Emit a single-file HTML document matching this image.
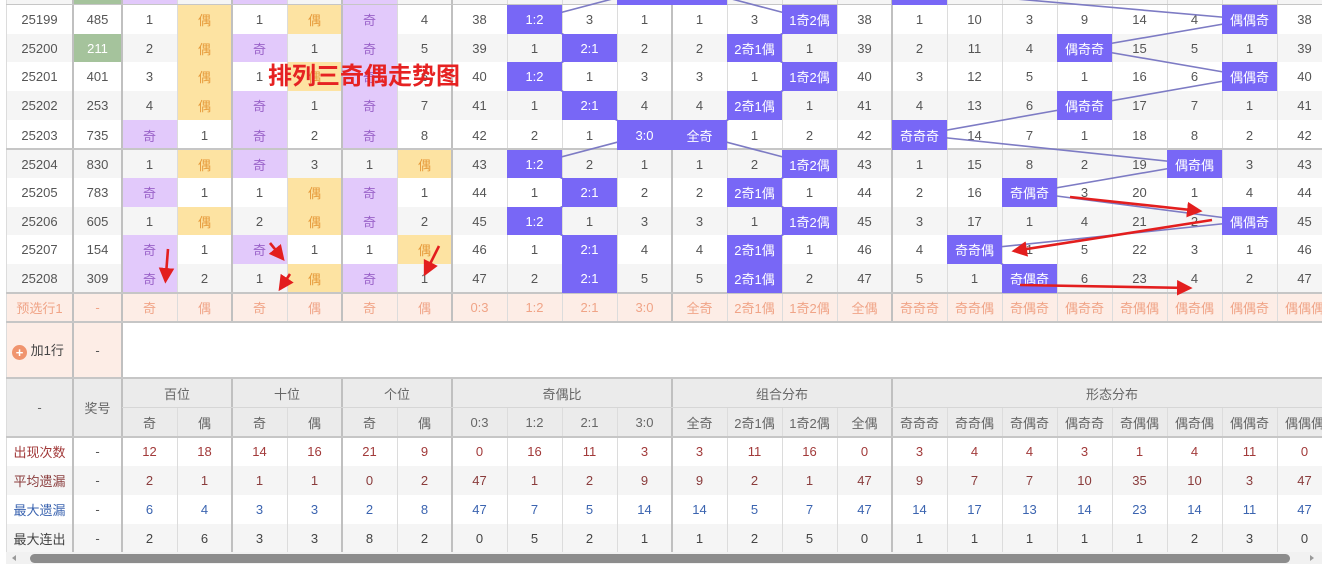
<!DOCTYPE html>
<html><head><meta charset="utf-8"><style>
*{margin:0;padding:0;box-sizing:border-box}
body{width:1322px;height:564px;overflow:hidden;background:#fff;font-family:"Liberation Sans","Noto Sans CJK SC",sans-serif;font-size:13px;color:#555;position:relative}
table{position:absolute;left:6px;top:0;border-collapse:collapse;table-layout:fixed;width:1326px}
td{padding:0;text-align:center;vertical-align:middle;overflow:hidden;white-space:nowrap}
tr.z td{background:#f5f5f5}
tr.w td{background:#fff}
td.p{background:#e2c9fb!important;color:#9a62c9}
td.y{background:#fde3a2!important;color:#e69a3a}
td.b{background:#7867f6!important;color:#fff;position:relative;z-index:2}
td.g{background:#a5c39c!important;color:#fff}
tr.pre td{background:#fdede6;color:#f0a487}
tr.h td{background:#ebebeb;color:#666}
.r1{color:#a23a3a}.r2{color:#8a3c3c}.r3{color:#3b64b0}.r4{color:#444}
.vl{position:absolute;top:0;width:1px;background:#dcdcdc;z-index:0}
.vt{position:absolute;width:2px;background:#c0c0c0;z-index:0}
.hl{position:absolute;height:2px;background:#c6c6c6;z-index:0}
svg{position:absolute;left:0;top:0}
</style></head><body>
<table>
<colgroup><col style="width:67px"><col style="width:49px"><col span="22" style="width:55px"></colgroup>
<tr class="z" style="height:5px"><td></td><td class="g"></td><td class="p"></td><td></td><td class="p"></td><td></td><td class="p"></td><td></td><td></td><td></td><td></td><td class="b"></td><td class="b"></td><td></td><td></td><td></td><td class="b"></td><td></td><td></td><td></td><td></td><td></td><td></td><td></td></tr>
<tr class="w" style="height:29px"><td>25199</td><td>485</td><td>1</td><td class="y">偶</td><td>1</td><td class="y">偶</td><td class="p">奇</td><td>4</td><td>38</td><td class="b">1:2</td><td>3</td><td>1</td><td>1</td><td>3</td><td class="b">1奇2偶</td><td>38</td><td>1</td><td>10</td><td>3</td><td>9</td><td>14</td><td>4</td><td class="b">偶偶奇</td><td>38</td></tr>
<tr class="z" style="height:28px"><td>25200</td><td class="g">211</td><td>2</td><td class="y">偶</td><td class="p">奇</td><td>1</td><td class="p">奇</td><td>5</td><td>39</td><td>1</td><td class="b">2:1</td><td>2</td><td>2</td><td class="b">2奇1偶</td><td>1</td><td>39</td><td>2</td><td>11</td><td>4</td><td class="b">偶奇奇</td><td>15</td><td>5</td><td>1</td><td>39</td></tr>
<tr class="w" style="height:29px"><td>25201</td><td>401</td><td>3</td><td class="y">偶</td><td>1</td><td class="y">偶</td><td class="p">奇</td><td>6</td><td>40</td><td class="b">1:2</td><td>1</td><td>3</td><td>3</td><td>1</td><td class="b">1奇2偶</td><td>40</td><td>3</td><td>12</td><td>5</td><td>1</td><td>16</td><td>6</td><td class="b">偶偶奇</td><td>40</td></tr>
<tr class="z" style="height:29px"><td>25202</td><td>253</td><td>4</td><td class="y">偶</td><td class="p">奇</td><td>1</td><td class="p">奇</td><td>7</td><td>41</td><td>1</td><td class="b">2:1</td><td>4</td><td>4</td><td class="b">2奇1偶</td><td>1</td><td>41</td><td>4</td><td>13</td><td>6</td><td class="b">偶奇奇</td><td>17</td><td>7</td><td>1</td><td>41</td></tr>
<tr class="w" style="height:30px"><td>25203</td><td>735</td><td class="p">奇</td><td>1</td><td class="p">奇</td><td>2</td><td class="p">奇</td><td>8</td><td>42</td><td>2</td><td>1</td><td class="b">3:0</td><td class="b">全奇</td><td>1</td><td>2</td><td>42</td><td class="b">奇奇奇</td><td>14</td><td>7</td><td>1</td><td>18</td><td>8</td><td>2</td><td>42</td></tr>
<tr class="z" style="height:28px"><td>25204</td><td>830</td><td>1</td><td class="y">偶</td><td class="p">奇</td><td>3</td><td>1</td><td class="y">偶</td><td>43</td><td class="b">1:2</td><td>2</td><td>1</td><td>1</td><td>2</td><td class="b">1奇2偶</td><td>43</td><td>1</td><td>15</td><td>8</td><td>2</td><td>19</td><td class="b">偶奇偶</td><td>3</td><td>43</td></tr>
<tr class="w" style="height:29px"><td>25205</td><td>783</td><td class="p">奇</td><td>1</td><td>1</td><td class="y">偶</td><td class="p">奇</td><td>1</td><td>44</td><td>1</td><td class="b">2:1</td><td>2</td><td>2</td><td class="b">2奇1偶</td><td>1</td><td>44</td><td>2</td><td>16</td><td class="b">奇偶奇</td><td>3</td><td>20</td><td>1</td><td>4</td><td>44</td></tr>
<tr class="z" style="height:28px"><td>25206</td><td>605</td><td>1</td><td class="y">偶</td><td>2</td><td class="y">偶</td><td class="p">奇</td><td>2</td><td>45</td><td class="b">1:2</td><td>1</td><td>3</td><td>3</td><td>1</td><td class="b">1奇2偶</td><td>45</td><td>3</td><td>17</td><td>1</td><td>4</td><td>21</td><td>2</td><td class="b">偶偶奇</td><td>45</td></tr>
<tr class="w" style="height:29px"><td>25207</td><td>154</td><td class="p">奇</td><td>1</td><td class="p">奇</td><td>1</td><td>1</td><td class="y">偶</td><td>46</td><td>1</td><td class="b">2:1</td><td>4</td><td>4</td><td class="b">2奇1偶</td><td>1</td><td>46</td><td>4</td><td class="b">奇奇偶</td><td>1</td><td>5</td><td>22</td><td>3</td><td>1</td><td>46</td></tr>
<tr class="z" style="height:29px"><td>25208</td><td>309</td><td class="p">奇</td><td>2</td><td>1</td><td class="y">偶</td><td class="p">奇</td><td>1</td><td>47</td><td>2</td><td class="b">2:1</td><td>5</td><td>5</td><td class="b">2奇1偶</td><td>2</td><td>47</td><td>5</td><td>1</td><td class="b">奇偶奇</td><td>6</td><td>23</td><td>4</td><td>2</td><td>47</td></tr>
<tr class="pre" style="height:29px"><td>预选行1</td><td>-</td><td>奇</td><td>偶</td><td>奇</td><td>偶</td><td>奇</td><td>偶</td><td>0:3</td><td>1:2</td><td>2:1</td><td>3:0</td><td>全奇</td><td>2奇1偶</td><td>1奇2偶</td><td>全偶</td><td>奇奇奇</td><td>奇奇偶</td><td>奇偶奇</td><td>偶奇奇</td><td>奇偶偶</td><td>偶奇偶</td><td>偶偶奇</td><td>偶偶偶</td></tr>
<tr style="height:56px"><td style="background:#fdede6;color:#444;text-align:left;padding-left:6px"><span style="display:inline-block;width:15px;height:15px;border-radius:50%;background:#f0946e;color:#fff;font-size:13px;line-height:15px;text-align:center;vertical-align:-2px;font-weight:bold">+</span> 加1行</td><td style="background:#fdede6">-</td><td colspan="22" style="background:#fff"></td></tr>
<tr class="h" style="height:30px"><td rowspan="2">-</td><td rowspan="2" style="vertical-align:top;padding-top:20px">奖号</td><td colspan="2">百位</td><td colspan="2">十位</td><td colspan="2">个位</td><td colspan="4">奇偶比</td><td colspan="4">组合分布</td><td colspan="8">形态分布</td></tr>
<tr class="h" style="height:29px"><td>奇</td><td>偶</td><td>奇</td><td>偶</td><td>奇</td><td>偶</td><td>0:3</td><td>1:2</td><td>2:1</td><td>3:0</td><td>全奇</td><td>2奇1偶</td><td>1奇2偶</td><td>全偶</td><td>奇奇奇</td><td>奇奇偶</td><td>奇偶奇</td><td>偶奇奇</td><td>奇偶偶</td><td>偶奇偶</td><td>偶偶奇</td><td>偶偶偶</td></tr>
<tr class="w r1" style="height:29px"><td>出现次数</td><td style="color:#555">-</td><td>12</td><td>18</td><td>14</td><td>16</td><td>21</td><td>9</td><td>0</td><td>16</td><td>11</td><td>3</td><td>3</td><td>11</td><td>16</td><td>0</td><td>3</td><td>4</td><td>4</td><td>3</td><td>1</td><td>4</td><td>11</td><td>0</td></tr>
<tr class="z r2" style="height:29px"><td>平均遗漏</td><td style="color:#555">-</td><td>2</td><td>1</td><td>1</td><td>1</td><td>0</td><td>2</td><td>47</td><td>1</td><td>2</td><td>9</td><td>9</td><td>2</td><td>1</td><td>47</td><td>9</td><td>7</td><td>7</td><td>10</td><td>35</td><td>10</td><td>3</td><td>47</td></tr>
<tr class="w r3" style="height:29px"><td>最大遗漏</td><td style="color:#555">-</td><td>6</td><td>4</td><td>3</td><td>3</td><td>2</td><td>8</td><td>47</td><td>7</td><td>5</td><td>14</td><td>14</td><td>5</td><td>7</td><td>47</td><td>14</td><td>17</td><td>13</td><td>14</td><td>23</td><td>14</td><td>11</td><td>47</td></tr>
<tr class="z r4" style="height:28px"><td>最大连出</td><td style="color:#555">-</td><td>2</td><td>6</td><td>3</td><td>3</td><td>8</td><td>2</td><td>0</td><td>5</td><td>2</td><td>1</td><td>1</td><td>2</td><td>5</td><td>0</td><td>1</td><td>1</td><td>1</td><td>1</td><td>1</td><td>2</td><td>3</td><td>0</td></tr>
</table>

<div class="vl" style="left:6px;height:552px"></div>
<div class="vl" style="left:177px;height:322px"></div><div class="vl" style="left:287px;height:322px"></div><div class="vl" style="left:397px;height:322px"></div>
<div class="vl" style="left:507px;height:322px"></div><div class="vl" style="left:562px;height:322px"></div><div class="vl" style="left:617px;height:322px"></div>
<div class="vl" style="left:727px;height:322px"></div><div class="vl" style="left:782px;height:322px"></div><div class="vl" style="left:837px;height:322px"></div>
<div class="vl" style="left:947px;height:322px"></div><div class="vl" style="left:1002px;height:322px"></div><div class="vl" style="left:1057px;height:322px"></div><div class="vl" style="left:1112px;height:322px"></div><div class="vl" style="left:1167px;height:322px"></div><div class="vl" style="left:1222px;height:322px"></div><div class="vl" style="left:1277px;height:322px"></div>
<div class="vl" style="top:408px;left:177px;height:144px"></div><div class="vl" style="top:408px;left:287px;height:144px"></div><div class="vl" style="top:408px;left:397px;height:144px"></div>
<div class="vl" style="top:408px;left:507px;height:144px"></div><div class="vl" style="top:408px;left:562px;height:144px"></div><div class="vl" style="top:408px;left:617px;height:144px"></div>
<div class="vl" style="top:408px;left:727px;height:144px"></div><div class="vl" style="top:408px;left:782px;height:144px"></div><div class="vl" style="top:408px;left:837px;height:144px"></div>
<div class="vl" style="top:408px;left:947px;height:144px"></div><div class="vl" style="top:408px;left:1002px;height:144px"></div><div class="vl" style="top:408px;left:1057px;height:144px"></div><div class="vl" style="top:408px;left:1112px;height:144px"></div><div class="vl" style="top:408px;left:1167px;height:144px"></div><div class="vl" style="top:408px;left:1222px;height:144px"></div><div class="vl" style="top:408px;left:1277px;height:144px"></div>
<div class="vt" style="left:72px;top:0;height:552px"></div>
<div class="vt" style="left:121px;top:0;height:552px"></div>
<div class="vt" style="left:231px;top:0;height:322px"></div><div class="vt" style="left:341px;top:0;height:322px"></div><div class="vt" style="left:451px;top:0;height:322px"></div><div class="vt" style="left:671px;top:0;height:322px"></div><div class="vt" style="left:891px;top:0;height:322px"></div>
<div class="vt" style="left:231px;top:378px;height:174px"></div><div class="vt" style="left:341px;top:378px;height:174px"></div><div class="vt" style="left:451px;top:378px;height:174px"></div><div class="vt" style="left:671px;top:378px;height:174px"></div><div class="vt" style="left:891px;top:378px;height:174px"></div>
<div class="hl" style="left:6px;width:1316px;top:4px;height:1px"></div>
<div class="hl" style="left:6px;width:1316px;top:148px"></div>
<div class="hl" style="left:6px;width:1316px;top:292px"></div>
<div class="hl" style="left:6px;width:1316px;top:321px"></div>
<div class="hl" style="left:6px;width:1316px;top:377px"></div>
<div class="hl" style="left:122px;width:1200px;top:407px;height:1px;background:#d6d6d6"></div>
<div class="hl" style="left:6px;width:1316px;top:436px"></div>

<svg width="1322" height="564" style="z-index:1" fill="none" stroke="#7d7bc4" stroke-width="1.6">
<polyline points="644.5,-9.5 534.5,19.5 589.5,48 534.5,76.5 589.5,105.5 644.5,135 534.5,164 589.5,192.5 534.5,221 589.5,249.5 589.5,278.5"/>
<polyline points="699.5,-9.5 809.5,19.5 754.5,48 809.5,76.5 754.5,105.5 699.5,135 809.5,164 754.5,192.5 809.5,221 754.5,249.5 754.5,278.5"/>
<polyline points="919.5,-9.5 1249.5,19.5 1084.5,48 1249.5,76.5 1084.5,105.5 919.5,135 1194.5,164 1029.5,192.5 1249.5,221 974.5,249.5 1029.5,278.5"/>
</svg>

<div style="position:absolute;left:268px;top:59px;z-index:3;color:#e62222;font-size:24px;font-weight:bold;white-space:nowrap;font-family:'Noto Sans CJK SC','WenQuanYi Zen Hei',sans-serif;line-height:30px">排列三奇偶走势图</div>

<svg width="1322" height="564" style="z-index:3" fill="none">
<defs><marker id="a" markerWidth="6" markerHeight="6" refX="5" refY="3" orient="auto" markerUnits="strokeWidth"><path d="M0,0 L6,3 L0,6 Z" fill="#e31e1e"/></marker></defs>
<g stroke="#e31e1e" stroke-width="2.6" marker-end="url(#a)">
<line x1="168" y1="249" x2="165.5" y2="281"/>
<line x1="270" y1="243" x2="283" y2="259"/>
<line x1="290" y1="274" x2="280" y2="289"/>
<line x1="439" y1="246" x2="425" y2="274"/>
<line x1="1070" y1="197" x2="1200" y2="211"/>
<line x1="1212" y1="220" x2="1014" y2="251"/>
<line x1="1020" y1="285" x2="1190" y2="288"/>
</g>
</svg>

<div style="position:absolute;left:6px;top:552px;width:1316px;height:12px;background:#f1f1f1"></div>
<div style="position:absolute;left:12px;top:555px;width:0;height:0;border-top:3px solid transparent;border-bottom:3px solid transparent;border-right:4px solid #999"></div>
<div style="position:absolute;left:30px;top:554px;width:1260px;height:9px;border-radius:5px;background:#8c8c8c"></div>
<div style="position:absolute;left:1310px;top:555px;width:0;height:0;border-top:3px solid transparent;border-bottom:3px solid transparent;border-left:4px solid #999"></div>
</body></html>
